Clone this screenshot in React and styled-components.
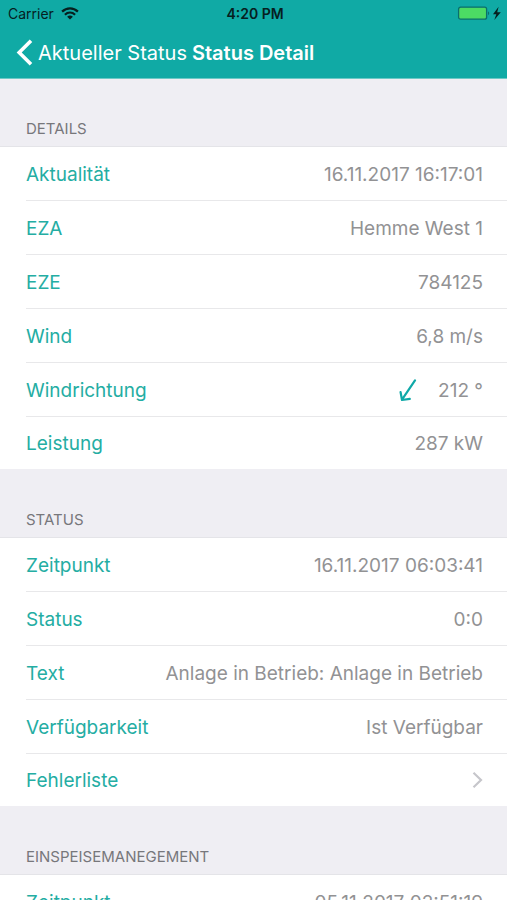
import React from "react";
import styled, { createGlobalStyle, css } from "styled-components";

const GlobalStyle = createGlobalStyle`
  * { box-sizing: border-box; }
  body {
    margin: 0;
    background: #efeef3;
    font-family: Inter, "Liberation Sans", sans-serif;
  }
`;

const Screen = styled.div`
  height: 100vh;
  display: flex;
  flex-direction: column;
  overflow: hidden;
`;

const TopBar = styled.header`
  flex: none;
  background: #10aaa5;
  box-shadow: 0 1px 0 #6cc9c6;
`;

const StatusBar = styled.div`
  display: grid;
  grid-template-columns: 1fr auto 1fr;
  align-items: center;
  height: 27px;
  padding: 0 5px 0 8px;
  font-size: 14px;
  line-height: 20px;
  color: #06201f;
`;

const Carrier = styled.div`
  display: flex;
  align-items: center;
  gap: 7px;
`;

const Clock = styled.time`
  font-weight: 600;
`;

const Power = styled.div`
  display: flex;
  justify-content: flex-end;
`;

const NavBar = styled.nav`
  display: flex;
  align-items: center;
  gap: 5px;
  height: 51px;
  padding: 0 16px;
  color: #fff;
`;

const BackButton = styled.button`
  display: flex;
  align-items: center;
  gap: 5px;
  padding: 0;
  border: 0;
  background: none;
  color: inherit;
  font: inherit;
  font-size: 20px;
  line-height: 26px;
  white-space: nowrap;
  cursor: pointer;
`;

const Title = styled.h1`
  margin: 0;
  font-size: 20px;
  font-weight: 600;
  line-height: 26px;
  white-space: nowrap;
`;

const Content = styled.main`
  flex: 1;
  min-height: 0;
  overflow: hidden;
`;

const SectionTitle = styled.h2`
  display: flex;
  align-items: flex-end;
  height: 69px;
  margin: 0;
  padding: 0 26px 7px;
  border-bottom: 1px solid #e4e4e8;
  color: #77777b;
  font-size: 15px;
  font-weight: 400;
  line-height: 20px;
`;

const List = styled.dl`
  margin: 0;
  padding-left: 26px;
  background: #fff;
`;

const rowLayout = css`
  display: flex;
  align-items: center;
  justify-content: space-between;
  width: 100%;
  height: 54px;
  padding: 2px 24px 0 0;
  border-bottom: 1px solid #e8e8ea;
  font-size: 19px;
  line-height: 26px;

  &:last-child:not(:first-child) {
    height: 52px;
    border-bottom: 0;
  }
`;

const Row = styled.div`
  ${rowLayout}
`;

const Label = styled.dt`
  color: #24ada3;
`;

const Value = styled.dd`
  display: flex;
  align-items: center;
  gap: 21px;
  margin: 0;
  color: #929294;
  white-space: nowrap;
`;

const LinkLabel = styled.a`
  color: inherit;
  text-decoration: none;
`;

const WifiIcon = () => (
  <svg width="18" height="13" viewBox="0 0 18 13" fill="none" stroke="currentColor" strokeWidth="2.2" aria-hidden="true">
    <path d="M1.1 4.6C5.6.2 12.4.2 16.9 4.6" />
    <path d="M3.9 7.7C6.9 4.9 11.1 4.9 14.1 7.7" />
    <path d="M9 12.6 6.1 9.8Q9 7.4 11.9 9.8Z" fill="currentColor" stroke="none" />
  </svg>
);

const BatteryIcon = () => (
  <svg width="45" height="15" viewBox="0 0 45 15" aria-hidden="true">
    <rect x="1.6" y="1.2" width="28" height="12" rx="2" fill="#4cdb64" stroke="#0a6f6b" strokeWidth="1.3" />
    <path d="M31.2 5.2Q33.2 7.2 31.2 9.2Z" fill="#0a5f5c" />
    <path d="M41.6.8 36 8.2H39.3L37.3 14 43.8 6.2H40.2Z" fill="#06201f" />
  </svg>
);

const BackIcon = () => (
  <svg width="17" height="27" viewBox="0 0 17 27" fill="none" stroke="currentColor" strokeWidth="3.6" aria-hidden="true">
    <path d="M15 1.8 3.2 13.5 15 25.2" />
  </svg>
);

const WindArrow = () => (
  <svg width="18" height="24" viewBox="0 0 18 24" fill="none" stroke="#10a9a8" strokeWidth="2.2" strokeLinecap="round" strokeLinejoin="round" aria-hidden="true">
    <path d="M16 1.4 3 20.6M1.6 13.2 3 21 10.8 19.8" />
  </svg>
);

const Chevron = () => (
  <svg width="11" height="18" viewBox="0 0 11 18" fill="none" stroke="#c6c6cb" strokeWidth="2.2" aria-hidden="true">
    <path d="M1.5.8 9 8 1.5 15.2" />
  </svg>
);

const sections = [
  {
    title: "DETAILS",
    rows: [
      { label: "Aktualität", value: "16.11.2017 16:17:01" },
      { label: "EZA", value: "Hemme West 1" },
      { label: "EZE", value: "784125" },
      { label: "Wind", value: "6,8 m/s" },
      { label: "Windrichtung", value: "212 °", icon: <WindArrow /> },
      { label: "Leistung", value: "287 kW" },
    ],
  },
  {
    title: "STATUS",
    rows: [
      { label: "Zeitpunkt", value: "16.11.2017 06:03:41" },
      { label: "Status", value: "0:0" },
      { label: "Text", value: "Anlage in Betrieb: Anlage in Betrieb" },
      { label: "Verfügbarkeit", value: "Ist Verfügbar" },
      { label: "Fehlerliste", href: "#fehlerliste", icon: <Chevron /> },
    ],
  },
  {
    title: "EINSPEISEMANEGEMENT",
    rows: [{ label: "Zeitpunkt", value: "05.11.2017 02:51:19" }],
  },
];

export default function App() {
  return (
    <Screen>
      <GlobalStyle />
      <TopBar>
        <StatusBar>
          <Carrier>
            Carrier
            <WifiIcon />
          </Carrier>
          <Clock>4:20 PM</Clock>
          <Power>
            <BatteryIcon />
          </Power>
        </StatusBar>
        <NavBar>
          <BackButton type="button">
            <BackIcon />
            Aktueller Status
          </BackButton>
          <Title>Status Detail</Title>
        </NavBar>
      </TopBar>
      <Content>
        {sections.map((section) => (
          <section key={section.title}>
            <SectionTitle>{section.title}</SectionTitle>
            <List>
              {section.rows.map((row) => (
                <Row key={row.label}>
                  <Label>
                    {row.href ? <LinkLabel href={row.href}>{row.label}</LinkLabel> : row.label}
                  </Label>
                  <Value>
                    {row.icon}
                    {row.value}
                  </Value>
                </Row>
              ))}
            </List>
          </section>
        ))}
      </Content>
    </Screen>
  );
}
